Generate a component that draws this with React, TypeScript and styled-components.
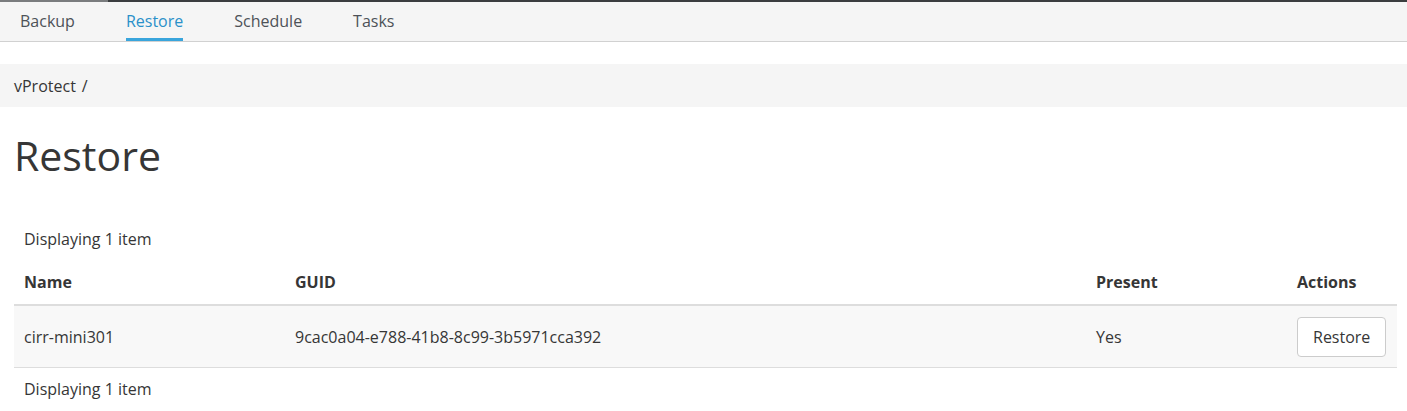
import React from "react";
import styled, { createGlobalStyle } from "styled-components";

const GlobalStyle = createGlobalStyle`
    html, body {
        margin: 0;
        padding: 0;
        background: #fff;
        font-family: "Open Sans", "Noto Sans", sans-serif;
        color: #363636;
    }
`

const TopStrip = styled.div`
    height: 2px;
    display: flex;
    background-color: #3b3d3f;
`

const TopStripLight = styled.div`
    width: 108px;
    background-color: #7a7c7e;
`

const TabBar = styled.nav`
    display: flex;
    height: 39px;
    padding-left: 20px;
    gap: 51px;
    background-color: #f5f5f5;
    border-bottom: 1px solid #d1d1d1;
`

const Tab = styled.a<{ $active?: boolean }>`
    display: flex;
    align-items: center;
    font-size: 16px;
    color: ${p => p.$active ? "#2a90c9" : "#4d5258"};
    border-bottom: 3px solid ${p => p.$active ? "#39a5dc" : "transparent"};
    box-sizing: border-box;
    padding-top: 1px;
    cursor: pointer;
`

const Breadcrumb = styled.div`
    margin-top: 22px;
    height: 43px;
    display: flex;
    align-items: center;
    gap: 6px;
    padding-left: 14px;
    background-color: #f5f5f5;
    font-size: 16px;
    color: #363636;
`

const Title = styled.h1`
    margin: 18px 0 0 14px;
    font-size: 41px;
    font-weight: 400;
    line-height: 60px;
    color: #363636;
`

const Content = styled.div`
    padding: 0 10px 0 14px;
`

const Counter = styled.div<{ $top: number; $bottom?: number }>`
    margin: ${p => p.$top}px 0 ${p => p.$bottom ?? 0}px;
    padding: 0 10px;
    font-size: 16px;
    line-height: 22px;
`

const Table = styled.table`
    width: 100%;
    table-layout: fixed;
    border-collapse: collapse;
    font-size: 16px;
    line-height: 22px;
`

const HeadCell = styled.th<{ $width?: number }>`
    text-align: left;
    font-weight: 700;
    padding: 11px 10px;
    border-bottom: 2px solid #dddddd;
    width: ${p => p.$width ? `${p.$width}px` : "auto"};
`

const Row = styled.tr`
    background-color: #f8f8f8;
    border-bottom: 1px solid #dddddd;
`

const Cell = styled.td`
    padding: 10px 10px;
    height: 41px;
`

const Button = styled.button`
    display: block;
    font-family: inherit;
    font-size: 16px;
    color: #363636;
    background-color: #fff;
    border: 1px solid #cccccc;
    border-radius: 4px;
    height: 40px;
    padding: 0 15px;
    cursor: pointer;
`

const tabs = ["Backup", "Restore", "Schedule", "Tasks"]

const items = [
    { name: "cirr-mini301", guid: "9cac0a04-e788-41b8-8c99-3b5971cca392", present: "Yes" },
]

const App = () => {
    return (
        <>
            <GlobalStyle />
            <TopStrip>
                <TopStripLight />
            </TopStrip>
            <TabBar>
                {tabs.map(t => <Tab key={t} $active={t === "Restore"}>{t}</Tab>)}
            </TabBar>

            <Breadcrumb>
                <span>vProtect</span>
                <span>/</span>
            </Breadcrumb>

            <Title>Restore</Title>

            <Content>
                <Counter $top={43} $bottom={10}>Displaying {items.length} item</Counter>
                <Table>
                    <thead>
                        <tr>
                            <HeadCell $width={251}>Name</HeadCell>
                            <HeadCell $width={781}>GUID</HeadCell>
                            <HeadCell $width={181}>Present</HeadCell>
                            <HeadCell>Actions</HeadCell>
                        </tr>
                    </thead>
                    <tbody>
                        {items.map(i =>
                            <Row key={i.guid}>
                                <Cell>{i.name}</Cell>
                                <Cell>{i.guid}</Cell>
                                <Cell>{i.present}</Cell>
                                <Cell><Button>Restore</Button></Cell>
                            </Row>
                        )}
                    </tbody>
                </Table>
                <Counter $top={10}>Displaying {items.length} item</Counter>
            </Content>
        </>
    )
}

export default App
